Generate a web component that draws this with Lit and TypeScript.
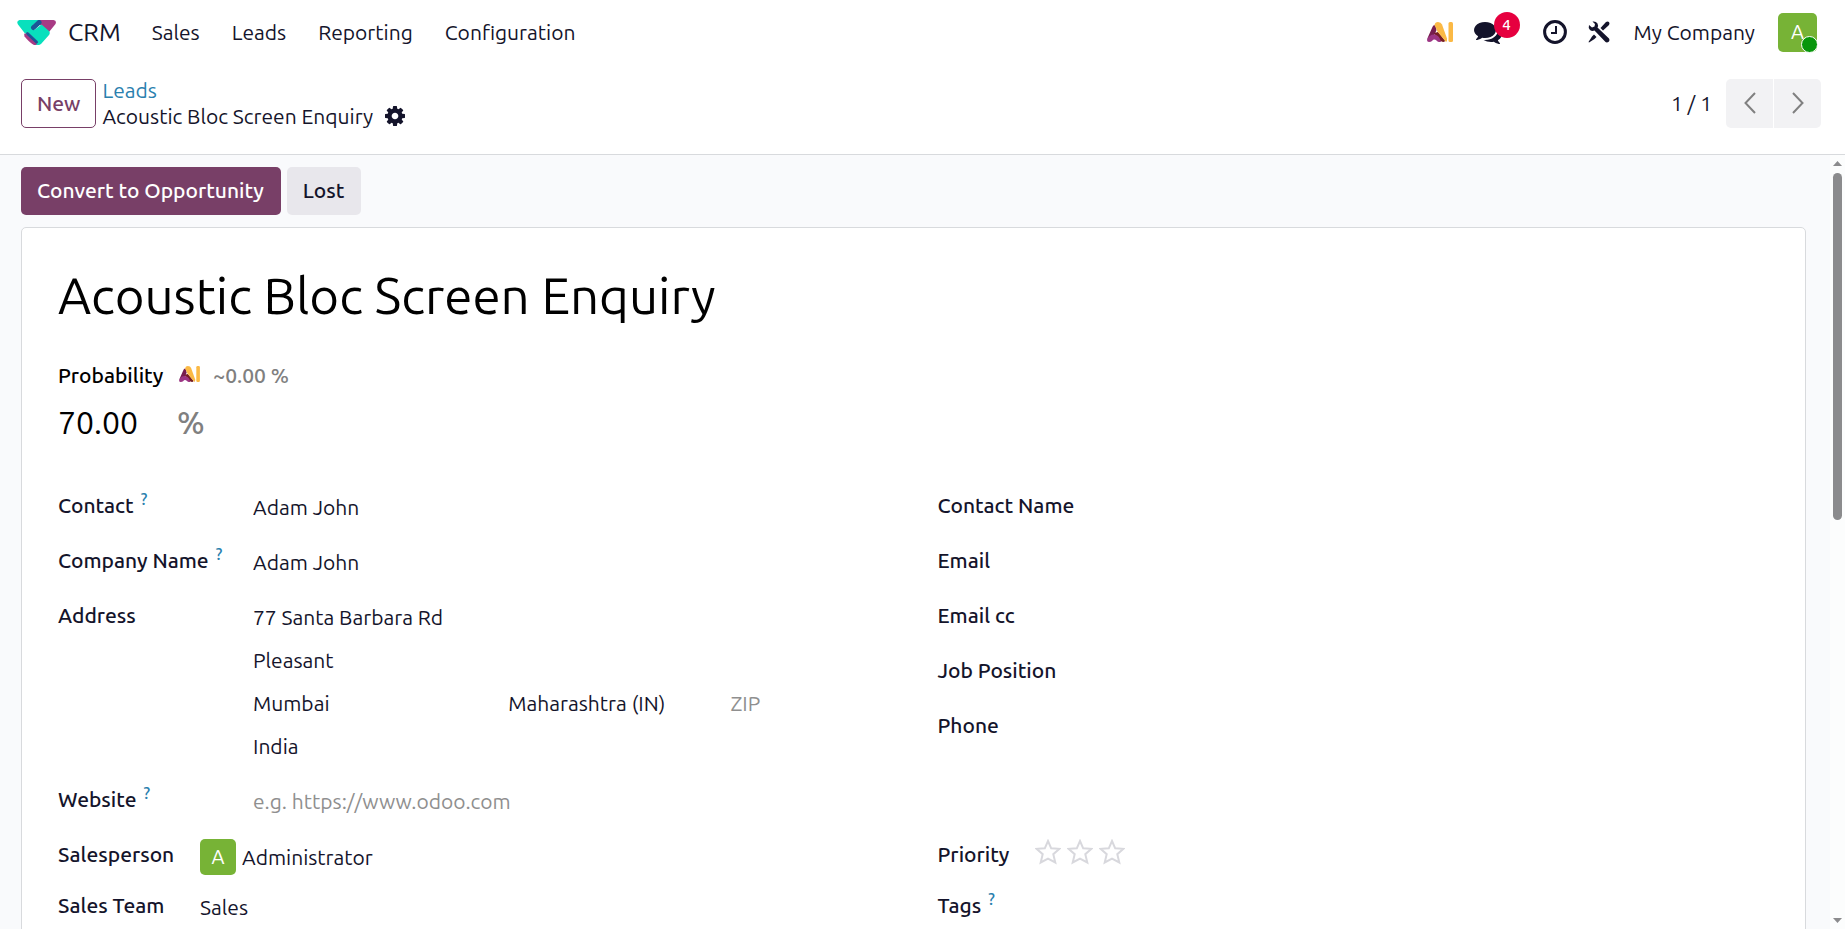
import { LitElement, html, svg, css, nothing } from "lit";
import { customElement } from "lit/decorators.js";

const COG =
  "M1152 896q0-106-75-181t-181-75-181 75-75 181 75 181 181 75 181-75 75-181zm512-109v222q0 12-8 23t-20 13l-185 28q-19 54-39 91 35 50 107 138 10 12 10 25t-9 23q-27 37-99 108t-94 71q-12 0-26-9l-138-108q-44 23-91 38-16 136-29 186-7 28-36 28h-222q-14 0-24.500-8.500t-11.500-21.500l-28-184q-49-16-90-37l-141 107q-10 9-25 9-14 0-25-11-126-114-165-168-7-10-7-23 0-12 8-23 15-21 51-66.500t54-70.500q-27-50-41-99l-183-27q-13-2-21-12.500t-8-23.500v-222q0-12 8-23t19-13l186-28q14-46 39-92-40-57-107-138-10-12-10-24 0-10 9-23 26-36 98.500-107.500t94.500-71.500q13 0 26 10l138 107q44-23 91-38 16-136 29-186 7-28 36-28h222q14 0 24.500 8.500t11.500 21.500l28 184q49 16 90 37l142-107q9-9 24-9 13 0 25 10 129 119 165 170 7 8 7 22 0 12-8 23-15 21-51 66.500t-54 70.500q26 50 41 98l183 28q13 2 21 12.500t8 23.500z";
const COMMENTS =
  "M1408 768q0 139-94 257t-256.500 186.500-353.500 68.500q-86 0-176-16-124 88-278 128-36 9-86 16h-3q-11 0-20.500-8t-11.500-21q-1-3-1-6.500t.5-6.500 2-6l2.500-5 3.500-5.500 4-5 4.500-5 4-4.500q5-6 23-25t26-29.500 22.500-29 25-38.500 20.500-44q-124-72-195-177t-71-224q0-139 94-257t256.500-186.500 353.500-68.500 353.500 68.500 256.500 186.500 94 257zm384 256q0 120-71 224.500t-195 176.500q10 24 20.500 44t25 38.500 22.500 29 26 29.500 23 25q1 1 4 4.500t4.500 5 4 5 3.500 5.500l2.500 5 2 6 .5 6.500-1 6.500q-3 14-13 22t-22 7q-50-7-86-16-154-40-278-128-90 16-176 16-271 0-472-132 58 4 88 4 161 0 309-45t264-129q125-92 192-212t67-254q0-77-23-152 129 71 204 178t75 230z";

const crmLogo = html`<svg class="logo" viewBox="0 0 39 25" aria-hidden="true">
  <path d="M22 0H36.500Q40 0.500 38.500 4L32 12L22 4Z" fill="#a83a84" />
  <path d="M8 13L21 22L20 25H17Q14 24 7.500 16.500Q6.500 14 8 13Z" fill="#a83a84" />
  <path d="M2.500 0H22L16 5L15 9L18 9.500L24.500 4.500L32 11Q33.500 13 32 15L24 24Q21.500 26 19 24.500L21 22L11 12.500L8 13.500L1 4.500Q-1 1 2.500 0Z" fill="#08e0bd" />
  <path d="M22 2.500L16.500 7.500" stroke="#1a5796" stroke-width="5" stroke-linecap="round" />
  <path d="M10.500 13.500L19.500 22" stroke="#1a5796" stroke-width="3" stroke-linecap="round" />
</svg>`;

const aiLogo = html`<svg class="ai" viewBox="0 0 26 20" aria-hidden="true">
  <path d="M7.500 3Q9 4 9.500 8L7 14L2 19Q-0.500 18 1 15L5 6Q6 3 7.500 3Z" fill="#761d4f" />
  <path d="M7 11L11 10L18 18.500Q18 20 16 20L11 18Z" fill="#761d23" />
  <path d="M2 20Q0 20 0 18Q2 12.500 7 12.500Q11 12.500 13 17L14 20Q11 20.500 9.500 18.500Q7 16.500 5 19Q4 20 2 20Z" fill="#9c3584" />
  <path d="M7.500 3Q8 0 11 0Q14 0 15 2.500L20 16.500Q20.500 19 19 20L10.500 9.500Z" fill="#fbb945" />
  <rect x="21.500" y="0" width="4.500" height="20" rx="1.500" fill="#fbb945" />
</svg>`;

const star = svg`<path d="M13 2L16.200 9.300L24.500 9.800L18.300 15.200L20.300 23.500L13 19.600L5.700 23.500L7.700 15.200L1.500 9.800L9.800 9.300Z"
  fill="none" stroke="#d8d8dd" stroke-width="2" stroke-linejoin="miter" />`;

@customElement("app-root")
export class AppRoot extends LitElement {
  static styles = css`
    :host {
      display: flex;
      flex-direction: column;
      height: 100vh;
      overflow: hidden;
      background: #fff;
      color: #14142b;
      font: 400 21px/32px Ubuntu, "Noto Sans", sans-serif;
    }
    * {
      box-sizing: border-box;
    }
    svg {
      display: block;
      flex: none;
    }
    a {
      color: inherit;
      text-decoration: none;
    }
    button,
    input {
      font: inherit;
      color: inherit;
      margin: 0;
      padding: 0;
      border: 0;
      background: none;
    }
    button {
      cursor: pointer;
    }
    input {
      display: block;
      width: 100%;
      min-width: 0;
      outline: none;
    }
    input::placeholder {
      color: #8f8f8f;
      opacity: 1;
    }

    .navbar {
      display: flex;
      align-items: center;
      justify-content: space-between;
      height: 64px;
      padding: 0 28px 0 17px;
    }
    .menu,
    .tray {
      display: flex;
      align-items: center;
    }
    .logo {
      width: 39px;
      height: 25px;
    }
    .brand {
      display: flex;
      align-items: center;
      gap: 12px;
      margin-right: 15px;
      font-size: 25px;
    }
    .menu .item {
      padding: 0 16px;
    }
    .ai {
      width: 26px;
      height: 20px;
    }
    .chat {
      position: relative;
      margin-left: 21px;
    }
    .badge {
      position: absolute;
      left: 20px;
      top: -6px;
      width: 26px;
      height: 26px;
      border-radius: 13px;
      background: #e6003f;
      color: #fff;
      font-size: 15px;
      font-weight: 500;
      line-height: 25px;
      text-align: center;
    }
    .clock {
      margin-left: 41px;
    }
    .tools {
      margin-left: 21px;
    }
    .company {
      margin-left: 24px;
    }
    .avatar {
      flex: none;
      display: grid;
      place-items: center;
      width: 36px;
      height: 36px;
      border-radius: 5px;
      background: #77b336;
      color: #fff;
      font-size: 20px;
    }
    .user {
      position: relative;
      width: 39px;
      height: 39px;
      margin-left: 23px;
    }
    .status {
      position: absolute;
      right: -1px;
      bottom: -1px;
      width: 17px;
      height: 17px;
      border: 1px solid #fff;
      border-radius: 50%;
      background: #08960c;
    }

    .panel {
      display: flex;
      align-items: center;
      justify-content: space-between;
      padding: 13px 24px 25px 21px;
      border-bottom: 1px solid #d8dadd;
    }
    .crumbs {
      display: flex;
      align-items: center;
      gap: 6px;
    }
    .btn {
      height: 48px;
      padding: 0 17px 2px 16px;
      border-radius: 5px;
      font-weight: 500;
    }
    .new {
      height: 49px;
      border: 1px solid #783f67;
      padding: 0 15px;
      color: #783f67;
    }
    .primary {
      background: #783f67;
      color: #fff;
    }
    .secondary {
      background: #e8e7ec;
    }
    .trail {
      line-height: 26px;
    }
    .trail a {
      display: block;
      width: max-content;
      color: #2a80ae;
    }
    .current {
      display: flex;
      align-items: center;
      gap: 12px;
    }
    .pager {
      display: flex;
      align-items: center;
      gap: 14px;
    }
    .arrows {
      display: flex;
      gap: 1px;
    }
    .arrows button {
      display: grid;
      place-items: center;
      width: 47px;
      height: 49px;
      background: #f2f2f4;
    }
    .arrows button:first-child {
      border-radius: 5px 0 0 5px;
    }
    .arrows button:last-child {
      border-radius: 0 5px 5px 0;
    }

    .body {
      flex: 1;
      min-height: 0;
      display: flex;
      background: #f9fafc;
    }
    main {
      flex: 1;
      min-width: 0;
      overflow-y: auto;
      scrollbar-width: none;
      padding: 12px 24px 24px 21px;
    }
    .actions {
      display: flex;
      gap: 6px;
      margin-bottom: 12px;
    }
    .sheet {
      min-height: 1400px;
      padding: 36px;
      border: 1px solid #d8dadd;
      border-radius: 5px;
      background: #fff;
    }
    .rail {
      display: flex;
      flex-direction: column;
      align-items: center;
      gap: 7px;
      width: 15px;
      padding: 6px 0;
      background: #fcfdfd;
    }
    .thumb {
      width: 9px;
      height: 45.5%;
      margin-bottom: auto;
      border-radius: 5px;
      background: #8b8b8d;
    }

    h1 {
      margin: 0;
      font-weight: 400;
    }
    .title {
      height: 62px;
      color: #000;
      font-size: 51px;
      line-height: 62px;
    }
    .prob-head {
      display: flex;
      align-items: center;
      margin-top: 33px;
      color: #000;
      font-weight: 500;
    }
    .prob-head .ai {
      width: 21px;
      height: 16px;
      margin: 0 13px 2px 16px;
    }
    .muted {
      color: #808080;
    }
    .prob {
      display: flex;
      margin: 7px 0 43px;
      color: #000;
      font-size: 32px;
      line-height: 48px;
    }
    .prob input {
      width: 119px;
      height: 48px;
    }
    .prob .muted {
      font-weight: 500;
    }

    .group {
      display: grid;
      grid-template-columns: 1fr 1fr;
      column-gap: 48px;
      align-items: start;
      margin-bottom: 21px;
    }
    .fields {
      display: grid;
      grid-template-columns: 195px 1fr;
      row-gap: 21px;
      align-items: start;
    }
    .fields.owner {
      grid-template-columns: 142px 1fr;
      row-gap: 13px;
    }
    .fields.rating {
      grid-template-columns: max-content 1fr;
      column-gap: 26px;
      row-gap: 13px;
    }
    .label {
      font-weight: 500;
      white-space: nowrap;
    }
    .label sup {
      margin-left: 7px;
      color: #2a80ae;
      font-size: 16px;
      line-height: 0;
      vertical-align: 8px;
    }
    .value {
      height: 34px;
      padding-top: 2px;
      line-height: 32px;
    }
    .address {
      display: grid;
      row-gap: 9px;
    }
    .city {
      display: grid;
      grid-template-columns: 255fr 222fr 159fr;
    }
    .person {
      display: flex;
      align-items: center;
      gap: 6px;
      height: 38px;
    }
    .stars {
      display: flex;
      gap: 6px;
      height: 38px;
      margin: 0;
      padding: 1px 0 0;
      border: 0;
    }
    .stars label {
      display: block;
      cursor: pointer;
    }
    .stars input {
      position: absolute;
      width: 1px;
      height: 1px;
      opacity: 0;
      appearance: none;
    }
  `;

  private label(id: string, text: string, help = false) {
    return html`<label class="label" for=${id}>${text}${help ? html`<sup>?</sup>` : nothing}</label>`;
  }

  private field(id: string, text: string, value = "", help = false, placeholder = "") {
    return html`${this.label(id, text, help)}
      <input class="value" id=${id} .value=${value} placeholder=${placeholder || nothing} />`;
  }

  render() {
    return html`
      <header class="navbar">
        <nav class="menu">
          <a class="brand" href="#">${crmLogo}CRM</a>
          ${["Sales", "Leads", "Reporting", "Configuration"].map(
            (name) => html`<a class="item" href="#">${name}</a>`
          )}
        </nav>
        <div class="tray">
          <button aria-label="AI">${aiLogo}</button>
          <button class="chat" aria-label="Messages">
            <svg width="28" height="28" viewBox="0 0 1792 1792" fill="#14142b"><path d=${COMMENTS} /></svg>
            <span class="badge">4</span>
          </button>
          <button class="clock" aria-label="Activities">
            <svg width="24" height="24" viewBox="0 0 24 24" fill="none" stroke="#14142b">
              <circle cx="12" cy="12" r="10.400" stroke-width="3" />
              <path d="M13 6V13H8" stroke-width="2" />
            </svg>
          </button>
          <button class="tools" aria-label="Tools">
            <svg width="22" height="22" viewBox="0 0 22 22" fill="#14142b">
              <path d="M1 4L4 6.500L6.500 5.500L7 3L4.500 0.500Q8 0 9.500 2.500Q10.500 4.500 9.500 6.500L21 17.500Q22 19 21 20.500Q19 22 17.500 21L6.500 9.500Q4 10.500 2 9Q0 7 1 4Z" />
              <path d="M12.500 7L18 1Q19.500 0 21 1Q22 2.500 21 4L15 9.500Z" />
              <path d="M6 13.500L8.500 16L6.500 18L1 21.500L0.500 21L4 15.500Z" />
            </svg>
          </button>
          <button class="company">My Company</button>
          <button class="user avatar" aria-label="User menu">A<span class="status"></span></button>
        </div>
      </header>

      <section class="panel">
        <div class="crumbs">
          <button class="btn new">New</button>
          <div class="trail">
            <a href="#">Leads</a>
            <div class="current">
              <span>Acoustic Bloc Screen Enquiry</span>
              <button aria-label="Actions">
                <svg width="20" height="20" viewBox="128 128 1536 1536" fill="#14142b"><path d=${COG} /></svg>
              </button>
            </div>
          </div>
        </div>
        <div class="pager">
          <span>1 / 1</span>
          <div class="arrows">
            <button aria-label="Previous">
              <svg width="12" height="22" viewBox="0 0 12 22" fill="none" stroke="#808080" stroke-width="2">
                <path d="M11 1L1.500 11L11 21" />
              </svg>
            </button>
            <button aria-label="Next">
              <svg width="12" height="22" viewBox="0 0 12 22" fill="none" stroke="#808080" stroke-width="2">
                <path d="M1 1L10.500 11L1 21" />
              </svg>
            </button>
          </div>
        </div>
      </section>

      <div class="body">
        <main>
          <div class="actions">
            <button class="btn primary">Convert to Opportunity</button>
            <button class="btn secondary">Lost</button>
          </div>
          <form class="sheet">
            <h1><input class="title" aria-label="Lead" .value=${"Acoustic Bloc Screen Enquiry"} /></h1>
            <div class="prob-head">
              <label for="probability">Probability</label>
              ${aiLogo}
              <span class="muted">~0.00 %</span>
            </div>
            <div class="prob">
              <input id="probability" .value=${"70.00"} />
              <span class="muted">%</span>
            </div>

            <div class="group">
              <div class="fields">
                ${this.field("contact", "Contact", "Adam John", true)}
                ${this.field("company", "Company Name", "Adam John", true)}
                ${this.label("street", "Address")}
                <div class="address">
                  <input class="value" id="street" .value=${"77 Santa Barbara Rd"} />
                  <input class="value" aria-label="Street 2" .value=${"Pleasant"} />
                  <div class="city">
                    <input class="value" aria-label="City" .value=${"Mumbai"} />
                    <input class="value" aria-label="State" .value=${"Maharashtra (IN)"} />
                    <input class="value" aria-label="ZIP" placeholder="ZIP" />
                  </div>
                  <input class="value" aria-label="Country" .value=${"India"} />
                </div>
                ${this.field("website", "Website", "", true, "e.g. https://www.odoo.com")}
              </div>
              <div class="fields">
                ${this.field("contact-name", "Contact Name")}
                ${this.field("email", "Email")}
                ${this.field("email-cc", "Email cc")}
                ${this.field("job", "Job Position")}
                ${this.field("phone", "Phone")}
              </div>
            </div>

            <div class="group">
              <div class="fields owner">
                ${this.label("salesperson", "Salesperson")}
                <div class="person">
                  <span class="avatar">A</span>
                  <input id="salesperson" .value=${"Administrator"} />
                </div>
                ${this.field("team", "Sales Team", "Sales")}
              </div>
              <div class="fields rating">
                <span class="label" id="priority">Priority</span>
                <fieldset class="stars" aria-labelledby="priority">
                  ${["Medium", "High", "Very High"].map(
                    (level) => html`<label>
                      <input type="radio" name="priority" aria-label=${level} />
                      <svg width="26" height="26" viewBox="0 0 26 26">${star}</svg>
                    </label>`
                  )}
                </fieldset>
                ${this.field("tags", "Tags", "", true)}
              </div>
            </div>
          </form>
        </main>
        <div class="rail" aria-hidden="true">
          <svg width="9" height="5" viewBox="0 0 9 5" fill="#8b8b8d"><path d="M0 5L4.500 0L9 5Z" /></svg>
          <div class="thumb"></div>
          <svg width="9" height="5" viewBox="0 0 9 5" fill="#8b8b8d"><path d="M0 0L4.500 5L9 0Z" /></svg>
        </div>
      </div>
    `;
  }
}
